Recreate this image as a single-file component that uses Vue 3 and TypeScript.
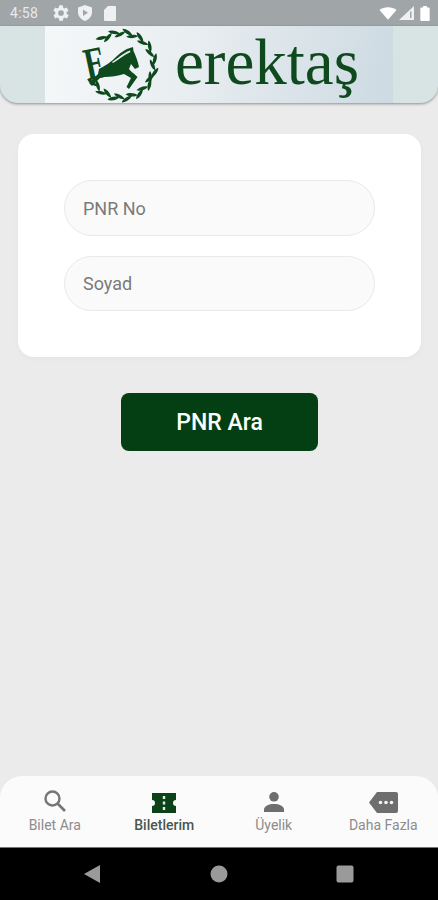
<script setup lang="ts">
interface Tab { label: string; icon: string; active?: boolean }
const tabs: Tab[] = [
  { label: 'Bilet Ara', icon: 'search' },
  { label: 'Biletlerim', icon: 'ticket', active: true },
  { label: 'Üyelik', icon: 'person' },
  { label: 'Daha Fazla', icon: 'more' },
]
const leaves: string[] = []
function place(deg: number, r: number, tilt: number) {
  const rad = (deg * Math.PI) / 180
  const x = 122.5 + r * Math.cos(rad)
  const y = 65.5 + r * Math.sin(rad)
  leaves.push(`translate(${x.toFixed(1)} ${y.toFixed(1)}) rotate(${deg + 90 + tilt})`)
}
for (let a = -126; a <= 150; a += 23) {
  const dir = a < 20 ? 1 : -1
  place(a, 34, 24 * dir)
  place(a + 10 * dir, 31, -24 * dir)
}
</script>

<template>
  <div class="page">
    <div class="status">
      <span class="time">4:58</span>
      <svg class="gear" width="16" height="16" viewBox="3 3 18 18"><path fill="#eef0f1" d="M18.400 13a6.500 6.500 0 0 0 0-2l2.100-1.600-2-3.500-2.500 1a7.500 7.500 0 0 0-1.700-1L14 3.200h-4l-.4 2.700a7.500 7.500 0 0 0-1.700 1l-2.500-1-2 3.500L5.600 11a6.500 6.500 0 0 0 0 2l-2.100 1.600 2 3.500 2.500-1a7.500 7.500 0 0 0 1.700 1l.4 2.700h4l.4-2.700a7.500 7.500 0 0 0 1.700-1l2.500 1 2-3.500zM12 15.200a3.200 3.200 0 1 1 0-6.400 3.200 3.200 0 0 1 0 6.400z"/></svg>
      <svg class="shield" width="14" height="16" viewBox="0 0 14 16"><path fill="#eef0f1" d="M7 0l7 2.400v5.100C14 11.200 11 14.600 7 16 3 14.600 0 11.200 0 7.500V2.400z"/><path fill="#a0a5a8" d="M5 4.500l5 3.300-5 3.300z"/></svg>
      <svg class="sd" width="12" height="15" viewBox="0 0 12 15"><path fill="#eef0f1" d="M4 0H11a1 1 0 0 1 1 1v13a1 1 0 0 1-1 1H1a1 1 0 0 1-1-1V4z"/></svg>
      <span class="grow"></span>
      <svg width="18" height="13" viewBox="0 0 19 14"><path fill="#fff" d="M9.500 13.700L.3 3.100C2.800 1.100 6 .2 9.500.2s6.700.9 9.200 2.900z"/></svg>
      <svg class="signal" width="15" height="14" viewBox="0 0 15 14"><path fill="#eef0f1" d="M15 0v14H0z"/><path fill="#a0a5a8" d="M11 5.500h1.500V12H11z"/></svg>
      <svg class="bat" width="10" height="15" viewBox="0 0 10 16"><path fill="#fff" d="M3 0h4v1.500h2a1 1 0 0 1 1 1V15a1 1 0 0 1-1 1H1a1 1 0 0 1-1-1V2.500a1 1 0 0 1 1-1h2z"/></svg>
    </div>

    <header class="header">
      <div class="banner">
        <svg class="logo" width="84" height="77" viewBox="80 26 84 77">
          <path v-for="(t, i) in leaves" :key="i" :transform="t" fill="#0f4a1f" d="M-6 0C-3 -2.300 3 -2.300 6 0C3 2.300 -3 2.300 -6 0z"/>
          <text class="e" transform="rotate(-12 94 62) translate(85 79) scale(.72 1.05)">E</text>
          <path fill="#0f4a1f" d="M90 83 L99 74 L100 69 C106 66 112 62 118 56 C122 52 127 49 131 48 L134 47 L134.500 51 C137 56 139 62 140 67 L136 69 L132 64 L130 69 C131 71 137 75 138.500 77 L130 89 L127.500 87 L132 78 L125 74 C119 76 112 77 105 77 L101 78 L93 86z"/>
          <path fill="#e8eef0" d="M113 62C118 59 124 53 131 50.500L131.500 52C125 55 119 60 114 63z"/>
        </svg>
        <span class="brand">erektaş</span>
      </div>
    </header>

    <main class="main">
      <section class="card">
        <input class="field" type="text" placeholder="PNR No" />
        <input class="field" type="text" placeholder="Soyad" />
      </section>
      <button class="submit" type="button">PNR Ara</button>
    </main>

    <nav class="tabs">
      <div v-for="tab in tabs" :key="tab.label" class="tab" :class="{ active: tab.active }">
        <svg v-if="tab.icon === 'search'" width="24" height="24" viewBox="0 0 24 24"><circle cx="9.500" cy="9.500" r="7" fill="none" stroke="#757575" stroke-width="2.400"/><path d="M14.500 14.500L22 22" stroke="#757575" stroke-width="2.600"/></svg>
        <svg v-else-if="tab.icon === 'ticket'" width="24" height="20" viewBox="0 0 24 20"><path fill="#0d4219" d="M0 0h24v7a3 3 0 0 0 0 6V20H0v-7a3 3 0 0 0 0-6z"/><path fill="#e4ebe5" d="M10.800 3h2.400v3h-2.400zM10.800 8.500h2.400v3h-2.400zM10.800 14h2.400v3h-2.400z"/></svg>
        <svg v-else-if="tab.icon === 'person'" width="22" height="22" viewBox="0 0 22 22"><circle cx="11" cy="5.800" r="4.800" fill="#6e6e6e"/><path fill="#6e6e6e" d="M1 21v-2.500C1 15 6 13 11 13s10 2 10 5.500V21z"/></svg>
        <svg v-else width="29" height="21" viewBox="0 0 29 21"><path fill="#6e6e6e" d="M8 0h19a2 2 0 0 1 2 2v17a2 2 0 0 1-2 2H8L0 10.500z"/><circle cx="11.500" cy="10.500" r="1.800" fill="#f4f4f4"/><circle cx="17" cy="10.500" r="1.800" fill="#f4f4f4"/><circle cx="22.500" cy="10.500" r="1.800" fill="#f4f4f4"/></svg>
        <span class="label">{{ tab.label }}</span>
      </div>
    </nav>

    <div class="sysnav">
      <svg width="18" height="18" viewBox="0 0 18 18"><path fill="#9a9a9a" d="M17 0v18L1 9z"/></svg>
      <svg width="18" height="18" viewBox="0 0 18 18"><circle cx="9" cy="9" r="8.500" fill="#9a9a9a"/></svg>
      <svg width="18" height="18" viewBox="0 0 18 18"><rect x=".5" y=".5" width="17" height="17" rx="2" fill="#9a9a9a"/></svg>
    </div>
  </div>
</template>

<style>
html, body { margin: 0; padding: 0; }
</style>

<style scoped>
.page {
  width: 438px;
  height: 900px;
  display: flex;
  flex-direction: column;
  background: #ebebeb;
  font-family: Roboto, "Liberation Sans", sans-serif;
  overflow: hidden;
}
.status {
  height: 26px;
  flex: none;
  display: flex;
  align-items: center;
  padding: 0 8px 0 10px;
  background: #a0a5a8;
  box-sizing: border-box;
}
.time { font-size: 14px; color: #e8eaeb; width: 43px; letter-spacing: .3px; }
.shield { margin-left: 9px; }
.sd { margin-left: 12px; }
.signal { margin-left: 2px; }
.bat { margin-left: 6px; }
.grow { flex: 1; }
.header {
  height: 77px;
  flex: none;
  background: #d8e4e4;
  border-radius: 0 0 18px 18px;
  box-shadow: 0 1px 3px rgba(0, 0, 0, .4);
  overflow: hidden;
  padding: 0 45px;
}
.banner {
  height: 100%;
  display: flex;
  align-items: center;
  justify-content: center;
  gap: 12px;
  background: linear-gradient(100deg, #f5f8f9 0%, #e9eef1 40%, #cddae2 100%);
}
.logo { flex: none; overflow: visible; }
.e { font: 700 44px "Liberation Serif", serif; fill: #0f4a1f; }
.brand {
  font: 400 65px/1 "Liberation Serif", serif;
  color: #0f4a1f;
  margin-bottom: 4px;
}
.main {
  flex: 1;
  display: flex;
  flex-direction: column;
  align-items: center;
  padding: 31px 17px 0 18px;
}
.card {
  width: 100%;
  box-sizing: border-box;
  height: 223px;
  padding: 46px;
  display: flex;
  flex-direction: column;
  gap: 20px;
  background: #fff;
  border-radius: 16px;
  box-shadow: 0 2px 6px rgba(0, 0, 0, .03);
}
.field {
  width: 100%;
  height: 56px;
  box-sizing: border-box;
  padding: 1px 18px 0;
  font: 400 18px Roboto, sans-serif;
  background: #fafafa;
  border: 1px solid #e9e9e9;
  border-radius: 28px;
  outline: none;
}
.field::placeholder { color: #7a7a7a; opacity: 1; }
.submit {
  margin-top: 36px;
  width: 197px;
  height: 58px;
  border: 0;
  border-radius: 8px;
  background: #033f12;
  color: #fff;
  font: 500 23px Roboto, sans-serif;
}
.tabs {
  height: 71px;
  flex: none;
  display: grid;
  grid-template-columns: repeat(4, 1fr);
  background: #fbfbfb;
  border-radius: 22px 22px 0 0;
}
.tab {
  display: flex;
  flex-direction: column;
  align-items: center;
  justify-content: flex-end;
  padding-bottom: 14px;
  gap: 4px;
}
.label { font-size: 14px; line-height: 16px; color: #8c8c8c; white-space: nowrap; }
.tab.active .label { color: #4a554e; font-weight: 500; }
.sysnav {
  height: 53px;
  flex: none;
  background: #000;
  display: flex;
  align-items: center;
  justify-content: space-between;
  padding: 0 84px 0 83px;
  box-sizing: border-box;
  border-top: 1px solid #777;
}
</style>
